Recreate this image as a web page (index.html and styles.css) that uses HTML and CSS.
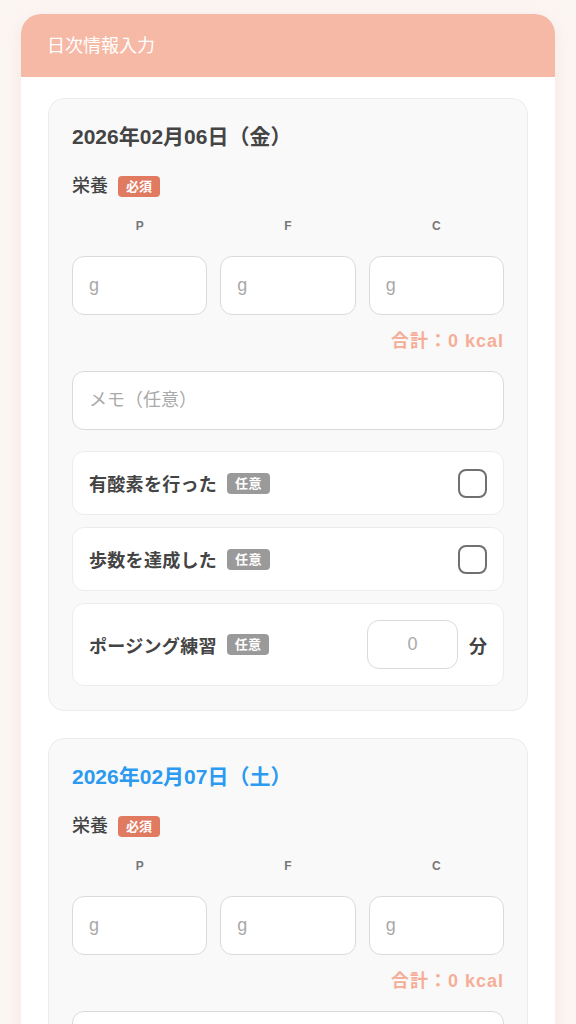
FILE: index.html
```html
<!DOCTYPE html>
<html lang="ja">

<head>
    <meta charset="UTF-8">
    <meta name="viewport" content="width=device-width, initial-scale=1.0">
    <title>日次情報入力</title>
    <link rel="stylesheet" href="styles.css">
</head>

<body>

    <div class="panel">
        <div class="panel-header">日次情報入力</div>

        <div class="panel-body">

            <div class="day-card">
                <div class="day-date">2026年02月06日（金）</div>

                <div class="section-title">栄養 <span class="badge badge-required">必須</span></div>

                <div class="pfc-labels">
                    <span>P</span>
                    <span>F</span>
                    <span>C</span>
                </div>
                <div class="pfc-inputs">
                    <input type="number" class="field" placeholder="g">
                    <input type="number" class="field" placeholder="g">
                    <input type="number" class="field" placeholder="g">
                </div>
                <div class="total">合計：0 kcal</div>

                <input type="text" class="field memo" placeholder="メモ（任意）">

                <div class="check-row">
                    <span class="row-label">有酸素を行った <span class="badge badge-optional">任意</span></span>
                    <input type="checkbox" class="check">
                </div>
                <div class="check-row">
                    <span class="row-label">歩数を達成した <span class="badge badge-optional">任意</span></span>
                    <input type="checkbox" class="check">
                </div>
                <div class="check-row">
                    <span class="row-label">ポージング練習 <span class="badge badge-optional">任意</span></span>
                    <span class="minutes">
                        <input type="number" class="field minutes-input" placeholder="0">
                        <span>分</span>
                    </span>
                </div>
            </div>

            <div class="day-card">
                <div class="day-date today">2026年02月07日（土）</div>

                <div class="section-title">栄養 <span class="badge badge-required">必須</span></div>

                <div class="pfc-labels">
                    <span>P</span>
                    <span>F</span>
                    <span>C</span>
                </div>
                <div class="pfc-inputs">
                    <input type="number" class="field" placeholder="g">
                    <input type="number" class="field" placeholder="g">
                    <input type="number" class="field" placeholder="g">
                </div>
                <div class="total">合計：0 kcal</div>

                <input type="text" class="field memo" placeholder="メモ（任意）">

                <div class="check-row">
                    <span class="row-label">有酸素を行った <span class="badge badge-optional">任意</span></span>
                    <input type="checkbox" class="check">
                </div>
            </div>

        </div>
    </div>

</body>

</html>
```

FILE: styles.css
```css
body {
    font-family: "Liberation Sans", "Noto Sans CJK JP", sans-serif;
    background-color: #fcf6f3;
    color: #444;
    margin: 0;
    padding: 14px 21px;
}

.panel {
    background-color: #fff;
    border-radius: 20px;
    overflow: hidden;
    box-shadow: 0 4px 18px rgba(200, 150, 130, 0.15);
}

.panel-header {
    background-color: #f6b9a6;
    color: #fff;
    font-size: 18px;
    font-weight: normal;
    line-height: 24px;
    padding: 20px 26px 19px;
}

.panel-body {
    padding: 21px 27px 0;
}

.day-card {
    background-color: #f9f9f9;
    border: 1px solid #ececec;
    border-radius: 16px;
    padding: 23px 23px 24px;
    margin-bottom: 27px;
}

.day-date {
    font-size: 21px;
    font-weight: bold;
    line-height: 30px;
    margin-bottom: 23px;
}

.day-date.today {
    color: #2b9af0;
}

.section-title {
    display: flex;
    align-items: center;
    gap: 10px;
    font-size: 18px;
    font-weight: 500;
    line-height: 22px;
}

.badge {
    display: inline-block;
    font-size: 13px;
    font-weight: bold;
    line-height: 21px;
    padding: 0 8px;
    border-radius: 4px;
    color: #fff;
}

.badge-required {
    background-color: #e07a60;
}

.badge-optional {
    background-color: #9a9a9a;
    margin-left: 10px;
}

.pfc-labels,
.pfc-inputs {
    display: grid;
    grid-template-columns: repeat(3, 1fr);
    gap: 13px;
}

.pfc-labels {
    margin-top: 21px;
    margin-bottom: 22px;
    font-size: 12px;
    font-weight: bold;
    line-height: 16px;
    color: #777;
    text-align: center;
}

.field {
    box-sizing: border-box;
    width: 100%;
    height: 59px;
    padding: 0 16px;
    border: 1px solid #dadada;
    border-radius: 12px;
    background-color: #fff;
    font-family: inherit;
    font-size: 18px;
    color: #444;
    outline: none;
    -moz-appearance: textfield;
}

.field::-webkit-outer-spin-button,
.field::-webkit-inner-spin-button {
    -webkit-appearance: none;
    margin: 0;
}

.field::placeholder {
    color: #aaa;
}

.total {
    margin-top: 15px;
    text-align: right;
    font-size: 18px;
    font-weight: bold;
    line-height: 22px;
    letter-spacing: 1px;
    color: #f5ae98;
}

.memo {
    display: block;
    margin-top: 19px;
    margin-bottom: 21px;
}

.check-row {
    display: flex;
    align-items: center;
    justify-content: space-between;
    min-height: 30px;
    padding: 16px;
    background-color: #fff;
    border: 1px solid #ececec;
    border-radius: 12px;
    margin-bottom: 12px;
}

.check-row:last-child {
    margin-bottom: 0;
}

.row-label {
    font-size: 18px;
    font-weight: bold;
    letter-spacing: 0.3px;
    display: flex;
    align-items: center;
}

.check {
    -webkit-appearance: none;
    appearance: none;
    width: 29px;
    height: 29px;
    margin: 0;
    border: 2px solid #707070;
    border-radius: 8px;
    background-color: #fff;
}

.minutes {
    display: flex;
    align-items: center;
    gap: 11px;
    font-size: 18px;
    font-weight: bold;
}

.minutes-input {
    width: 91px;
    height: 49px;
    text-align: center;
    padding: 0 8px;
}
```
